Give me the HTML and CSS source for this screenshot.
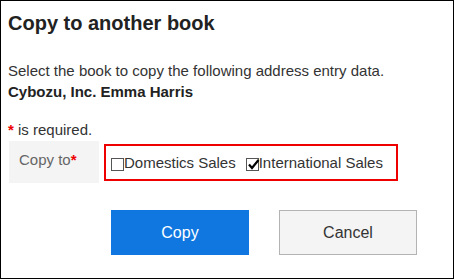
FILE: index.html
```html
<!DOCTYPE html>
<html lang="en">
<head>
    <meta charset="UTF-8">
    <meta name="viewport" content="width=device-width, initial-scale=1.0">
    <title>Copy to another book</title>
    <link rel="stylesheet" href="styles.css">
</head>
<body>
    <div class="dialog">
        <h1 class="dialog-title">Copy to another book</h1>

        <p class="description">
            Select the book to copy the following address entry data.<br>
            <strong>Cybozu, Inc. Emma Harris</strong>
        </p>

        <p class="required-note"><span class="required">*</span> is required.</p>

        <div class="form-row">
            <div class="form-label">Copy to<span class="required">*</span></div>
            <div class="form-field">
                <label class="option">
                    <span class="check"></span>Domestics Sales
                </label>
                <label class="option">
                    <span class="check checked">
                        <svg width="13" height="13" viewBox="0 0 13 13">
                            <path d="M2 6.5 L5 10 L11.5 2" fill="none" stroke="#000" stroke-width="2.2"/>
                        </svg>
                    </span>International Sales
                </label>
            </div>
        </div>

        <div class="buttons">
            <button class="btn btn-primary">Copy</button>
            <button class="btn btn-secondary">Cancel</button>
        </div>
    </div>
</body>
</html>
```

FILE: styles.css
```css
body {
    margin: 0;
    font-family: "Liberation Sans", Arial, sans-serif;
    color: #333;
    background: white;
}
.dialog {
    width: 454px;
    height: 279px;
    box-sizing: border-box;
    border: 1px solid #000;
    padding: 10px 7px 0;
}
.dialog-title {
    margin: 0;
    font-size: 20px;
    line-height: 24px;
    font-weight: bold;
    color: #222;
}
.description {
    margin: 25px 0 0;
    font-size: 15px;
    line-height: 21px;
}
.description strong {
    color: #222;
}
.required-note {
    margin: 17px 0 0;
    font-size: 15px;
    line-height: 21px;
}
.required {
    color: #e00;
    font-weight: bold;
}
.form-row {
    display: flex;
    align-items: flex-start;
    margin-top: 1px;
    padding-left: 1px;
}
.form-label {
    width: 90px;
    height: 42px;
    box-sizing: border-box;
    padding: 8px 10px 0;
    background-color: #f4f4f4;
    color: #666;
    font-size: 15px;
    line-height: 21px;
}
.form-field {
    display: flex;
    align-items: center;
    gap: 10px;
    width: 294px;
    height: 37px;
    box-sizing: border-box;
    margin: 3px 0 0 5px;
    padding: 0 5px;
    border: 2px solid #e00;
    font-size: 15px;
    line-height: 17px;
}
.option {
    display: flex;
    align-items: center;
}
.check {
    display: inline-block;
    width: 13px;
    height: 13px;
    box-sizing: border-box;
    margin-top: 3px;
    border: 1px solid #555;
    background: white;
    position: relative;
}
.check svg {
    position: absolute;
    left: 0;
    top: -1px;
}
.buttons {
    display: flex;
    gap: 30px;
    margin-top: 27px;
    padding-left: 103px;
}
.btn {
    width: 138px;
    height: 45px;
    box-sizing: border-box;
    font-family: inherit;
    font-size: 16px;
    cursor: pointer;
}
.btn-primary {
    background-color: #0f77df;
    color: white;
    border: none;
}
.btn-secondary {
    background-color: #f4f4f4;
    color: #333;
    border: 1px solid #b3b3b3;
}
```
